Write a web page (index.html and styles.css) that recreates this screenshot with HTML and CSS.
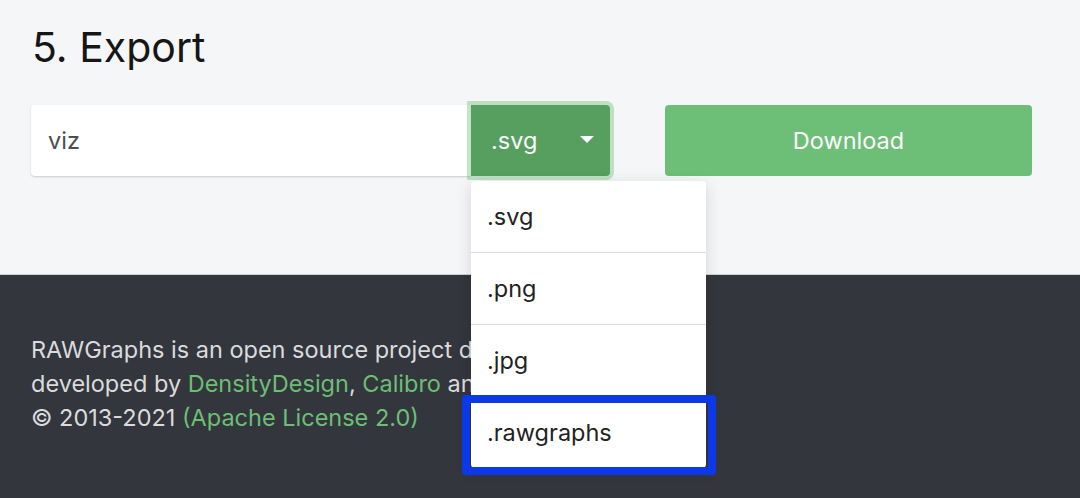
FILE: index.html
```html
<!DOCTYPE html>
<html lang="en">
<head>
    <meta charset="UTF-8">
    <meta name="viewport" content="width=device-width, initial-scale=1.0">
    <title>RAWGraphs - Export</title>
    <link rel="stylesheet" href="styles.css">
</head>
<body>
    <section class="export">
        <h2 class="export-title">5. Export</h2>
        <div class="export-row">
            <div class="input-group">
                <input class="file-name" type="text" value="viz">
                <div class="format">
                    <button class="format-toggle">
                        <span>.svg</span>
                        <span class="caret"></span>
                    </button>
                    <ul class="format-menu">
                        <li class="format-item">.svg</li>
                        <li class="format-item">.png</li>
                        <li class="format-item">.jpg</li>
                        <li class="format-item format-item-marked">.rawgraphs</li>
                    </ul>
                </div>
            </div>
            <button class="download">Download</button>
        </div>
    </section>

    <footer class="footer">
        <p>
            RAWGraphs is an open source project designed and<br>
            developed by <a href="#">DensityDesign</a>, <a href="#">Calibro</a> and <a href="#">Inmagik</a>.<br>
            © 2013-2021 <a href="#">(Apache License 2.0)</a>
        </p>
    </footer>
</body>
</html>
```

FILE: styles.css
```css
body {
    margin: 0;
    font-family: Inter, "Noto Sans", sans-serif;
    background-color: #f5f6f8;
    color: #1c1c1c;
    height: 498px;
    overflow: hidden;
}
.export {
    padding: 22px 48px 98px 31px;
}
.export-title {
    margin: 0 0 33px 1px;
    font-size: 41px;
    font-weight: 400;
    line-height: 50px;
    color: #161616;
}
.export-row {
    display: flex;
    align-items: stretch;
    gap: 55px;
    height: 71px;
}
.input-group {
    display: flex;
    width: 579px;
}
.file-name {
    width: 440px;
    box-sizing: border-box;
    border: none;
    border-radius: 4px 0 0 4px;
    background: #fff;
    box-shadow: 0 1px 2px rgba(0, 0, 0, 0.18);
    padding: 0 17px;
    font-family: inherit;
    font-size: 23.5px;
    color: #4a4d52;
    outline: none;
}
.format {
    position: relative;
    width: 139px;
}
.format-toggle {
    width: 100%;
    height: 100%;
    display: flex;
    align-items: center;
    justify-content: space-between;
    padding: 0 16px 0 20px;
    border: none;
    border-radius: 0 4px 4px 0;
    background-color: #579f5e;
    color: #fff;
    font-family: inherit;
    font-size: 23.5px;
    box-shadow: 0 0 0 4px rgba(109, 190, 118, 0.4);
}
.caret {
    width: 0;
    height: 0;
    border-left: 7px solid transparent;
    border-right: 7px solid transparent;
    border-top: 7px solid #fff;
    margin-top: -2px;
}
.format-menu {
    position: absolute;
    top: 76px;
    left: 0;
    width: 235px;
    margin: 0;
    padding: 0;
    list-style: none;
    background: #fff;
    border-radius: 4px;
    box-shadow: 0 4px 16px rgba(0, 0, 0, 0.14);
    z-index: 2;
}
.format-item {
    position: relative;
    height: 71px;
    display: flex;
    align-items: center;
    padding-left: 16px;
    font-size: 23.5px;
    color: #222;
    border-bottom: 1px solid #dcdcdc;
}
.format-item:last-child {
    border-bottom: none;
}
.format-item-marked::after {
    content: "";
    position: absolute;
    left: -9px;
    right: -10px;
    top: -2px;
    bottom: -7px;
    border: 8px solid #0b39ea;
    border-radius: 3px;
}
.download {
    width: 367px;
    border: none;
    border-radius: 4px;
    background-color: #6dbe77;
    color: #fff;
    font-family: inherit;
    font-size: 23.5px;
}
.footer {
    background-color: #33363c;
    border-top: 1px solid #cfd1d4;
    padding: 58px 31px 63px;
}
.footer p {
    margin: 0;
    font-size: 23.5px;
    line-height: 34px;
    color: #dadbdc;
}
.footer a {
    color: #6cbf74;
    text-decoration: none;
}
```
